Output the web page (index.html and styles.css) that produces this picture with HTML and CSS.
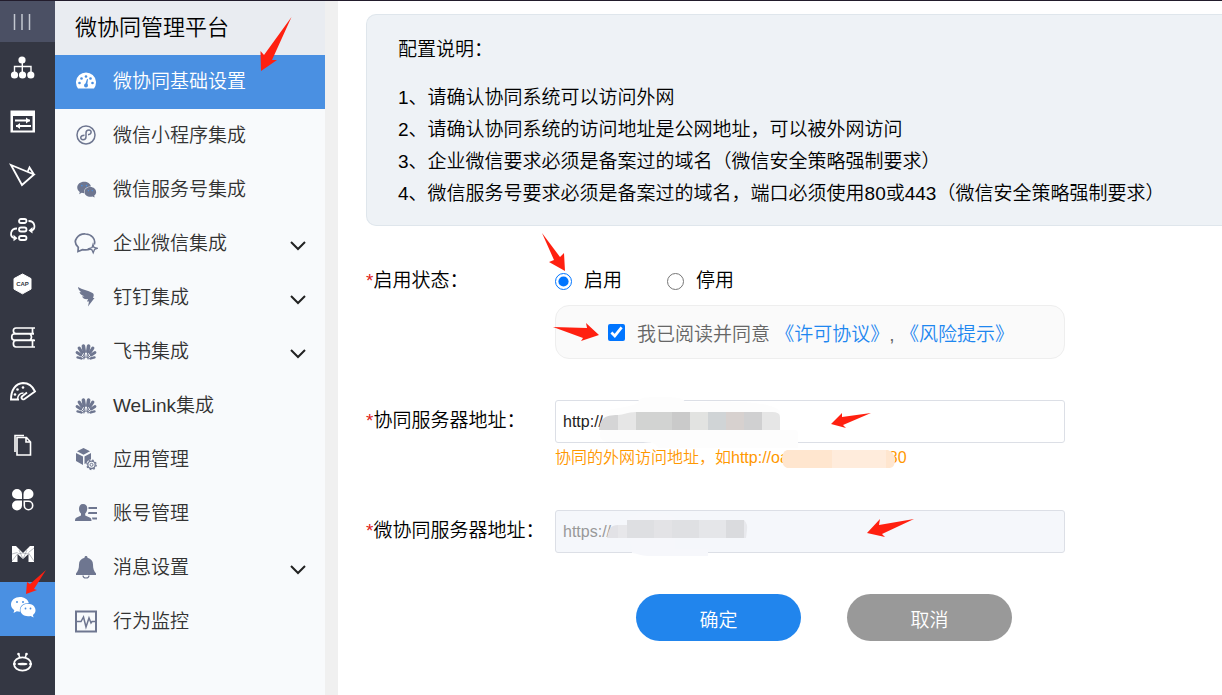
FILE: index.html
```html
<!DOCTYPE html>
<html lang="zh-CN">
<head>
  <meta charset="utf-8">
  <title>微协同管理平台</title>
  <link rel="stylesheet" href="styles.css">
</head>
<body>
  <!-- 共用图标 -->
  <svg class="defs" width="0" height="0" aria-hidden="true">
    <symbol id="down" viewBox="0 0 16 10"><path d="M1 1l7 7 7-7" fill="none" stroke="#222" stroke-width="2"/></symbol>
    <symbol id="wechat" viewBox="0 0 26 22">
      <path d="M10 1C5 1 1 4 1 8.500c0 2.500 1.300 4.400 3.300 5.700L3.500 17l3.300-1.700c1 .3 2 .4 3.200.4-1-5 3-9 8.800-8.700C18 3.400 14.300 1 10 1z"/>
      <path d="M18 7.800c-4.200 0-7.600 2.700-7.600 6.300s3.400 6.200 7.600 6.200c1 0 1.900-.2 2.700-.4l2.900 1.500-.7-2.500c1.600-1.200 2.600-2.700 2.600-4.700C25.500 10.600 22.200 7.800 18 7.800z"/>
      <g class="eye"><circle cx="7" cy="6" r="1"/><circle cx="13" cy="6" r="1"/><circle cx="15.500" cy="12.500" r=".9"/><circle cx="20.500" cy="12.500" r=".9"/></g>
    </symbol>
    <symbol id="flower" viewBox="0 0 24 24">
      <g transform="translate(12 19)" stroke="#6e7690" stroke-linecap="round" fill="none">
        <path d="M-1.800-7.500L-2.600-13M1.800-7.500L2.600-13" stroke-width="3.600"/>
        <path d="M-4-6.500L-6.800-10.800M4-6.500L6.800-10.800" stroke-width="3.200"/>
        <path d="M-5.200-4L-9-6.500M5.200-4L9-6.500" stroke-width="2.800"/>
        <path d="M-4.800-.6L-8.500-1.600M4.800-.6L8.500-1.600" stroke-width="2.400"/>
        <path d="M-.8-1.500L-1.900-8M.8-1.500L1.900-8M-1.300-1.300L-4.200-7M1.300-1.300L4.200-7M-1.600-.8L-5.500-4.200M1.600-.8L5.500-4.200M-2-.1L-5-.6M2-.1L5-.6" stroke-width="1"/>
      </g>
    </symbol>
  </svg>

  <div class="app">
    <!-- 最左侧图标栏 -->
    <nav class="rail">
      <button class="rail-toggle" type="button" aria-label="展开">
        <svg width="18" height="16" viewBox="0 0 18 16"><path d="M1.500 0v16M9 0v16M16.500 0v16" stroke="#c3c7d0" stroke-width="1.500"/></svg>
      </button>
      <a class="rail-item" href="#" aria-label="组织"><svg viewBox="0 0 28 28">
        <g fill="#fff"><circle cx="13" cy="5" r="3.600"/><circle cx="5.500" cy="20" r="3.600"/><circle cx="13.500" cy="20" r="3.600"/><circle cx="21.800" cy="20" r="3.600"/></g>
        <path d="M13.300 6v13M5.500 17v-5.500h16.500V17" fill="none" stroke="#fff" stroke-width="1.400"/></svg></a>
      <a class="rail-item" href="#" aria-label="配置"><svg viewBox="0 0 28 28">
        <path d="M1.500 1.500h24.500v22h-24.500zM4 7v14.500h19.500V7z" fill="#fff" fill-rule="evenodd"/>
        <path d="M6 11.500h15M7 17h15" fill="none" stroke="#fff" stroke-width="1.800"/><path d="M17 8.500v6l4-3zM11 14v6l-4-3z" fill="#fff"/></svg></a>
      <a class="rail-item" href="#" aria-label="门户"><svg viewBox="0 0 28 28">
        <path d="M2 2l11 20 12-10.500zM18.500 9l2-4.500 4.500 7" fill="none" stroke="#fff" stroke-width="1.800"/></svg></a>
      <a class="rail-item" href="#" aria-label="流程"><svg viewBox="0 0 28 28">
        <g fill="none" stroke="#fff" stroke-width="1.800"><rect x="10" y="2" width="7.500" height="4" rx="2"/><rect x="10" y="10.500" width="7.500" height="4" rx="2"/><rect x="10" y="19" width="7.500" height="4" rx="2"/>
        <path d="M19.500 4c7 0 7.500 8 3 9.500M8 11.500c-7 0-7.500 8-3 9.500"/></g><path d="M23.500 10v6.500l-4-3zM4.500 17.800v6.500l4-3z" fill="#fff"/></svg></a>
      <a class="rail-item" href="#" aria-label="CAP"><svg viewBox="0 0 28 28">
        <path d="M13.500 3l8.500 4.600v10.500l-8.500 4.700L5 18.100V7.600z" fill="#fff" stroke="#fff" stroke-linejoin="round"/>
        <text class="cap" x="13.500" y="15" text-anchor="middle">CAP</text></svg></a>
      <a class="rail-item" href="#" aria-label="文档"><svg viewBox="0 0 28 28">
        <path d="M26 3H7C3.500 3 3.500 8.500 7 8.500h18M23.500 3v5.500M25 9H5c-3 0-3 6 0 6h20.500M21 9c2 2 2 4 0 6M26 15.500H7C3.500 15.500 3.500 22 7 22h19M23.500 15.500V22" fill="none" stroke="#fff" stroke-width="1.700"/></svg></a>
      <a class="rail-item" href="#" aria-label="报表"><svg viewBox="0 0 28 28">
        <path d="M10 20.500H2C2 11 6.500 4.500 14 4c5.500 0 9.500 3 12 8.500l-10.500 7.500c-2.500 1.500-4-1.500-2-3l4.500-3.500" fill="none" stroke="#fff" stroke-width="1.900"/>
        <path d="M8.500 20c.5-4 2.500-6 6-6" fill="none" stroke="#fff" stroke-width="1.500"/>
        <g fill="#fff"><circle cx="6" cy="15.500" r="1.300"/><circle cx="8.500" cy="10.500" r="1.300"/><circle cx="14" cy="8.500" r="1.300"/></g></svg></a>
      <a class="rail-item" href="#" aria-label="文件"><svg viewBox="0 0 28 28">
        <path d="M8 4.500h9.500l4 4.500V22H8zM17 4.500V9h4.500M6 19V2.500h9" fill="none" stroke="#fff" stroke-width="1.600"/></svg></a>
      <a class="rail-item" href="#" aria-label="应用"><svg viewBox="0 0 28 28">
        <path d="M13 12H8a5 5 0 1 1 5-5zM14.500 12h5a5 5 0 1 0-5-5zM13 13.500H8a5 5 0 1 0 5 5z" fill="#fff"/>
        <path d="M15.300 14.300h4.200a4.200 4.200 0 1 1-4.200 4.200z" fill="none" stroke="#fff" stroke-width="1.600"/></svg></a>
      <a class="rail-item" href="#" aria-label="M"><svg viewBox="0 0 28 28">
        <path d="M3 5h4l7 7 7-7h4v16h-5.500v-8L14 18l-5.500-5v8H3z" fill="#fff"/>
        <path d="M3 13l5.500-1.500M3 20l5.500-7M8.500 13l5-1 6 1M19.500 12L25 20M19.500 11.500L25 7M10 9l4 9 4-9" fill="none" stroke="#8a8e99" stroke-width=".6"/></svg></a>
      <a class="rail-item active" href="#" aria-label="微协同"><svg class="wx" viewBox="0 0 28 28"><use href="#wechat" x="1" y="1" width="26" height="22"/></svg>
        <svg class="arrow arrow-rail" viewBox="25 569 24 26"><path d="M46 570L34 589l3 1-11 4 1-12 3 2z"/></svg></a>
      <a class="rail-item" href="#" aria-label="机器人"><svg viewBox="0 0 28 28">
        <ellipse cx="13.500" cy="15" rx="8.500" ry="6.700" fill="none" stroke="#fff" stroke-width="1.800"/>
        <path d="M9.500 5l1.500 4M17.500 5L16 9M4 15h3M20 15h3" fill="none" stroke="#fff" stroke-width="1.500"/>
        <g fill="#fff"><ellipse cx="13.500" cy="15" rx="5" ry="1.300"/><circle cx="9.500" cy="5" r="1.300"/><circle cx="17.500" cy="5" r="1.300"/></g></svg></a>
    </nav>

    <!-- 二级菜单 -->
    <aside class="sidebar">
      <h1>微协同管理平台</h1>
      <nav class="menu">
        <a class="menu-item active" href="#"><svg class="icon" viewBox="0 0 24 24">
          <path d="M4 18.500A10 10 0 1 1 20 18.500z"/>
          <g fill="#4a90e2"><circle cx="5.500" cy="13" r="1.300"/><circle cx="7.500" cy="8.500" r="1.300"/><circle cx="12" cy="6.500" r="1.300"/><circle cx="16.500" cy="8.500" r="1.300"/><circle cx="18.500" cy="13" r="1.300"/><circle cx="12" cy="15.500" r="2"/><path d="M11 15l2-6 1 .3-.8 6z"/></g></svg>
          <span>微协同基础设置</span>
          <svg class="arrow arrow-menu" viewBox="259 15 34 58"><path d="M291.500 17L272 60h5l-16 11-.5-20 3.500 4z"/></svg></a>
        <a class="menu-item" href="#"><svg class="icon" viewBox="0 0 24 24">
          <g fill="none" stroke="#6e7690"><circle cx="12" cy="11" r="9" stroke-width="1.500"/><path d="M10.500 11.200c-5 0-4.500 4.500-1.500 4.500 2 0 3-1.200 3-3V9c0-1.800 1.200-3 3-3 3 0 3 4.500-1 4.700" stroke-width="1.500"/></g></svg>
          <span>微信小程序集成</span></a>
        <a class="menu-item" href="#"><svg class="icon wx" viewBox="0 0 24 24"><use href="#wechat" x="2" y="3" width="21" height="17"/></svg><span>微信服务号集成</span></a>
        <a class="menu-item" href="#"><svg class="icon" viewBox="0 0 24 24">
          <path d="M16.500 17c-2.500 1-5.500 1.200-8 .6L4 19.500l.3-4.200C-3 8.500 5 1.500 11.500 2c6 .3 10.500 5 8.800 10.500" fill="none" stroke="#6e7690" stroke-width="1.700"/>
          <path d="M19 12.500l1 3 3.500.8-3 1.200-1.300 3.300-1.300-3-3-1.300 3.200-1z" fill="none" stroke="#6e7690" stroke-width="1.300"/></svg>
          <span>企业微信集成</span><svg class="down"><use href="#down"/></svg></a>
        <a class="menu-item" href="#"><svg class="icon" viewBox="0 0 24 24">
          <path d="M4 1c4 2.500 10 3.500 14.500 6 2 1.200 1 3.700.5 5h1.500l-6.500 8.500 1-5h-2l1-2.500c-3 .5-5-.5-6-2.500l2.500-.2C7.500 9.500 6 8 5.500 6l2 .3C5.500 5 4.200 3.500 4 1z"/></svg>
          <span>钉钉集成</span><svg class="down"><use href="#down"/></svg></a>
        <a class="menu-item" href="#"><svg class="icon"><use href="#flower"/></svg><span>飞书集成</span><svg class="down"><use href="#down"/></svg></a>
        <a class="menu-item" href="#"><svg class="icon"><use href="#flower"/></svg><span>WeLink集成</span></a>
        <a class="menu-item" href="#"><svg class="icon" viewBox="0 0 24 24">
          <path d="M9.500 0l6.500 3.200-6.500 3.500L3 3.200zM2 5l7 3.500V17L2 13zM17 5l-6.500 3.500V16l2-1c.6-2 2.300-3.300 4.500-3.500z"/>
          <circle cx="17.500" cy="16.800" r="3.700" fill="none" stroke="#6e7690" stroke-width="1.300"/><circle cx="17.500" cy="16.800" r="1.500" fill="none" stroke="#6e7690"/>
          <circle cx="17.500" cy="16.800" r="4.700" fill="none" stroke="#6e7690" stroke-width="1.300" stroke-dasharray="1.700 2"/></svg>
          <span>应用管理</span></a>
        <a class="menu-item" href="#"><svg class="icon" viewBox="0 0 24 24">
          <path d="M9 2c3 0 4.500 2 4.200 5-.2 2-1 3.500-2 4.500v2l5 2.200c1 .5 1.300 1.600 1.300 3.300H1c0-1.700.3-2.800 1.300-3.300L7 13.500v-2C6 10.500 5 9 5 7c0-3 1.200-5 4-5zM14.500 5H23v2h-8.500zM14.500 10H23v2h-9zM18 15.500h5v2h-4.500z"/></svg>
          <span>账号管理</span></a>
        <a class="menu-item" href="#"><svg class="icon" viewBox="0 0 24 24">
          <path d="M12 0c1 0 1.500.6 1.500 1.700C17 2.500 19 5 19 8.500c0 4 .8 6.500 3 9V19H2v-1.500C4.200 15 5 12.500 5 8.500 5 5 7 2.500 10.500 1.700 10.500.6 11 0 12 0z"/>
          <path d="M9 19.500a3 2.500 0 0 0 6 0" fill="none" stroke="#6e7690" stroke-width="1.200"/></svg>
          <span>消息设置</span><svg class="down"><use href="#down"/></svg></a>
        <a class="menu-item" href="#"><svg class="icon" viewBox="0 0 24 24">
          <rect x="2" y="1.500" width="20" height="20" fill="none" stroke="#6e7690" stroke-width="2"/>
          <path d="M3 11.500h4L9.500 7l2.500 10 3-9 2 5 1-1.500h3" fill="none" stroke="#6e7690" stroke-width="1.500"/></svg>
          <span>行为监控</span></a>
      </nav>
    </aside>

    <main class="main">
      <section class="notice">
        <h2>配置说明：</h2>
        <p>1、请确认协同系统可以访问外网</p>
        <p>2、请确认协同系统的访问地址是公网地址，可以被外网访问</p>
        <p>3、企业微信要求必须是备案过的域名（微信安全策略强制要求）</p>
        <p>4、微信服务号要求必须是备案过的域名，端口必须使用80或443（微信安全策略强制要求）</p>
      </section>

      <form class="form">
        <div class="row">
          <span class="label label-status" id="statusLabel"><i>*</i>启用状态：</span>
          <div class="control">
            <div class="radios" role="radiogroup" aria-labelledby="statusLabel">
              <label><input type="radio" name="status" checked><span>启用</span></label>
              <label><input type="radio" name="status"><span>停用</span></label>
              <svg class="arrow arrow-radio" viewBox="540 231 28 42"><path d="M542 233l18 24 4-4 1 18-16-9 5-2z"/></svg>
            </div>
            <div class="agree">
              <input type="checkbox" id="agree" checked>
              <span><label for="agree">我已阅读并同意</label> <a href="#">《许可协议》</a>, <a href="#">《风险提示》</a></span>
              <svg class="arrow arrow-agree" viewBox="552 321 50 24"><path d="M553 327l34 1-1-5 13 12-18 6 2-3z"/></svg>
            </div>
          </div>
        </div>

        <div class="row">
          <label class="label" for="server"><i>*</i>协同服务器地址：</label>
          <div class="control">
            <div class="field">
              <input class="text" type="text" id="server" value="http://">
              <svg class="mosaic mosaic-server" viewBox="599 396 200 54">
                <path d="M602 412c10-4 25-4 36-9 0-5 5-6 22-6s24 1 25 5c20 0 82-4 95 9v19h15q3 0 3 4v14h-140c-1-4-5-6-20-6h-30c-10 0-10-12-3-16z" fill="#fdfdfd"/>
                <path d="M599 430c1-11 5-15 19-15v15z" fill="#d5d5d6"/>
                <path d="M618 430v-15c6 0 9-3 18-3v18z" fill="#e6e6e6"/>
                <path d="M636 412h36v18h-36z" fill="#d2d3d2"/>
                <path d="M672 412h18v18h-18z" fill="#cacaca"/>
                <path d="M690 412h18v18h-18z" fill="#e2e3e1"/>
                <path d="M708 412h18v18h-18z" fill="#d0d4d6"/>
                <path d="M726 412h18v18h-18z" fill="#d7d1cf"/>
                <path d="M744 412h18v18h-18z" fill="#d0d0d1"/>
                <path d="M762 412h10q8 0 8 5v13h-18z" fill="#e6e6e6"/>
              </svg>
              <svg class="arrow arrow-server" viewBox="830 412 44 18"><path d="M871 413l-28 12 3 3-15-4 11-11v4z"/></svg>
            </div>
            <p class="hint">协同的外网访问地址，如http://oa<svg class="mosaic-hint" viewBox="0 0 113 18"><path d="M5 0h101q7 3 7 10t-5 8H5Q0 16 0 9t5-9z" fill="#ffe6cf"/><path d="M50 0h54v18H50z" fill="#ffecdc"/></svg>80</p>
          </div>
        </div>

        <div class="row">
          <label class="label" for="wxServer"><i>*</i>微协同服务器地址：</label>
          <div class="control">
            <div class="field">
              <input class="text readonly" type="text" id="wxServer" value="https://" readonly>
              <svg class="mosaic mosaic-wx" viewBox="607 512 144 46">
                <path d="M627 519c3-8 45-8 48 0v30h33v7h-60c-7 0-12-3-16-3z" fill="#f6f7fb"/>
                <path d="M607 538c2-10 4-13 11-13v13z" fill="#e2e2e6"/>
                <path d="M618 538v-13h9v-5h5v18z" fill="#e7e7ea"/>
                <path d="M627 520h27v18h-27z" fill="#dedfe2"/>
                <path d="M654 520h18v18h-18z" fill="#e3e3e6"/>
                <path d="M672 520h27v18h-27z" fill="#dfe0e3"/>
                <path d="M699 520h27v18h-27z" fill="#e5e6e9"/>
                <path d="M726 520h18v18h-18z" fill="#dadbde"/>
                <path d="M744 520q4 4 3 10l-1 8h-2z" fill="#e8e9ed"/>
              </svg>
              <svg class="arrow arrow-wx" viewBox="866 518 50 20"><path d="M914 519l-32 15 3 3-18-4 13-14-1 6z"/></svg>
            </div>
          </div>
        </div>

        <div class="buttons">
          <button class="btn btn-ok" type="button">确定</button>
          <button class="btn btn-cancel" type="button">取消</button>
        </div>
      </form>
    </main>
  </div>
</body>
</html>
```

FILE: styles.css
```css
* {
  box-sizing: border-box;
}
body {
  margin: 0;
  font: 350 19px "Liberation Sans", "Noto Sans CJK SC", sans-serif;
  text-spacing-trim: space-all;
  color: #000;
  background: #fff;
}
h1, h2, p {
  margin: 0;
  font-weight: inherit;
}
a {
  color: #1e87f0;
  text-decoration: none;
}
svg {
  flex: none;
}
.defs {
  position: absolute;
}
.app {
  display: flex;
  min-height: 100vh;
  border-top: 1px solid #221c2c;
}

/* rail */
.rail {
  flex: none;
  width: 55px;
  background: #343743;
}
.rail-toggle {
  display: flex;
  align-items: center;
  width: 100%;
  height: 41px;
  padding: 0 13px;
  border: 0;
  background: #4b5064;
}
.rail-item {
  position: relative;
  display: flex;
  align-items: center;
  height: 54px;
  padding-left: 9px;
}
.rail-item > svg:first-child {
  width: 28px;
  height: 28px;
}
.rail-item.active {
  background: #4a90e2;
}
.rail .wx {
  fill: #fff;
}
.eye {
  fill: #4a90e2;
}
.cap {
  font: bold 6px "Liberation Sans", sans-serif;
  fill: #343743;
}

/* sidebar */
.sidebar {
  flex: none;
  width: 283px;
  border-right: 13px solid #f0f0f0;
  background: #f8fafc;
}
.sidebar h1 {
  height: 54px;
  padding-left: 20px;
  font-size: 22px;
  line-height: 54px;
  background: #e9ecf1;
}
.menu-item {
  position: relative;
  display: flex;
  align-items: center;
  height: 54px;
  padding: 0 19px;
  color: #333;
}
.menu-item span,
.radios span {
  padding-bottom: 5px;
}
.menu-item.active {
  color: #fff;
  background: #4a90e2;
}
.icon {
  width: 24px;
  height: 24px;
  margin-right: 15px;
  fill: #6e7690;
}
.active .icon {
  fill: #fff;
}
.down {
  width: 16px;
  height: 10px;
  margin: 4px 0 0 auto;
}
.menu .eye {
  fill: #f8fafc;
}
.rail .eye {
  fill: #4a90e2;
}

/* main */
.main {
  flex: 1;
  min-width: 0;
  padding: 13px 0 0 28px;
}
.notice {
  padding: 19px 31px 15px;
  border: 1px solid #dfe6ec;
  border-right: 0;
  border-radius: 10px 0 0 10px;
  background: #eef2f6;
  line-height: 32px;
}
.notice h2 {
  margin-bottom: 16px;
  font-size: 19px;
}
.form {
  padding-top: 31px;
}
.row {
  display: flex;
  margin-bottom: 41px;
}
.label {
  flex: none;
  width: 189px;
  line-height: 42px;
}
.label-status {
  line-height: 48px;
}
.label i {
  color: #e02020;
  font-style: normal;
}
.control {
  width: 510px;
}
.radios {
  position: relative;
  display: flex;
  gap: 45px;
  align-items: center;
  height: 48px;
}
.radios label {
  display: flex;
  gap: 12px;
  align-items: center;
}
input[type=radio],
input[type=checkbox] {
  flex: none;
  width: 17px;
  height: 17px;
  margin: 0;
}
.agree {
  position: relative;
  display: flex;
  gap: 12px;
  align-items: center;
  height: 54px;
  padding-left: 52px;
  border: 1px solid #eee;
  border-radius: 14px;
  color: #666;
  background: #fafafa;
}
.field {
  position: relative;
}
.text {
  display: block;
  width: 100%;
  height: 43px;
  padding: 0 7px;
  border: 1px solid #dcdfe6;
  border-radius: 3px;
  font: 16px "Liberation Sans", "Noto Sans CJK SC", sans-serif;
  color: #222;
  background: #fff;
}
.text.readonly {
  color: #999;
  background: #f5f7fb;
}
.hint {
  height: 26px;
  font-size: 16px;
  line-height: 30px;
  color: #ff9800;
  white-space: nowrap;
}
.buttons {
  display: flex;
  gap: 46px;
  padding-left: 270px;
}
.btn {
  width: 165px;
  height: 47px;
  padding: 2px 0 0;
  border: 0;
  border-radius: 24px;
  font: inherit;
  color: #fff;
}
.btn-ok {
  background: #2185ed;
}
.btn-cancel {
  background: #999;
}

/* blurred parts of the addresses */
.mosaic {
  position: absolute;
}
.mosaic-server {
  left: 44px;
  top: -4px;
  width: 200px;
  height: 54px;
}
.mosaic-wx {
  left: 52px;
  top: 2px;
  width: 144px;
  height: 46px;
}
.mosaic-hint {
  position: relative;
  width: 113px;
  height: 18px;
  margin: 0 -6px 0 -7px;
  vertical-align: middle;
}

/* red arrows */
.arrow {
  position: absolute;
  z-index: 1;
  fill: #ff2010;
}
.arrow-rail {
  left: 25px;
  top: -13px;
  width: 24px;
  height: 26px;
}
.arrow-menu {
  left: 204px;
  top: -40px;
  width: 34px;
  height: 58px;
}
.arrow-radio {
  left: -15px;
  top: -26px;
  width: 28px;
  height: 42px;
}
.arrow-agree {
  left: -4px;
  top: 15px;
  width: 50px;
  height: 24px;
}
.arrow-server {
  left: 275px;
  top: 12px;
  width: 44px;
  height: 18px;
}
.arrow-wx {
  left: 311px;
  top: 8px;
  width: 50px;
  height: 20px;
}
```
